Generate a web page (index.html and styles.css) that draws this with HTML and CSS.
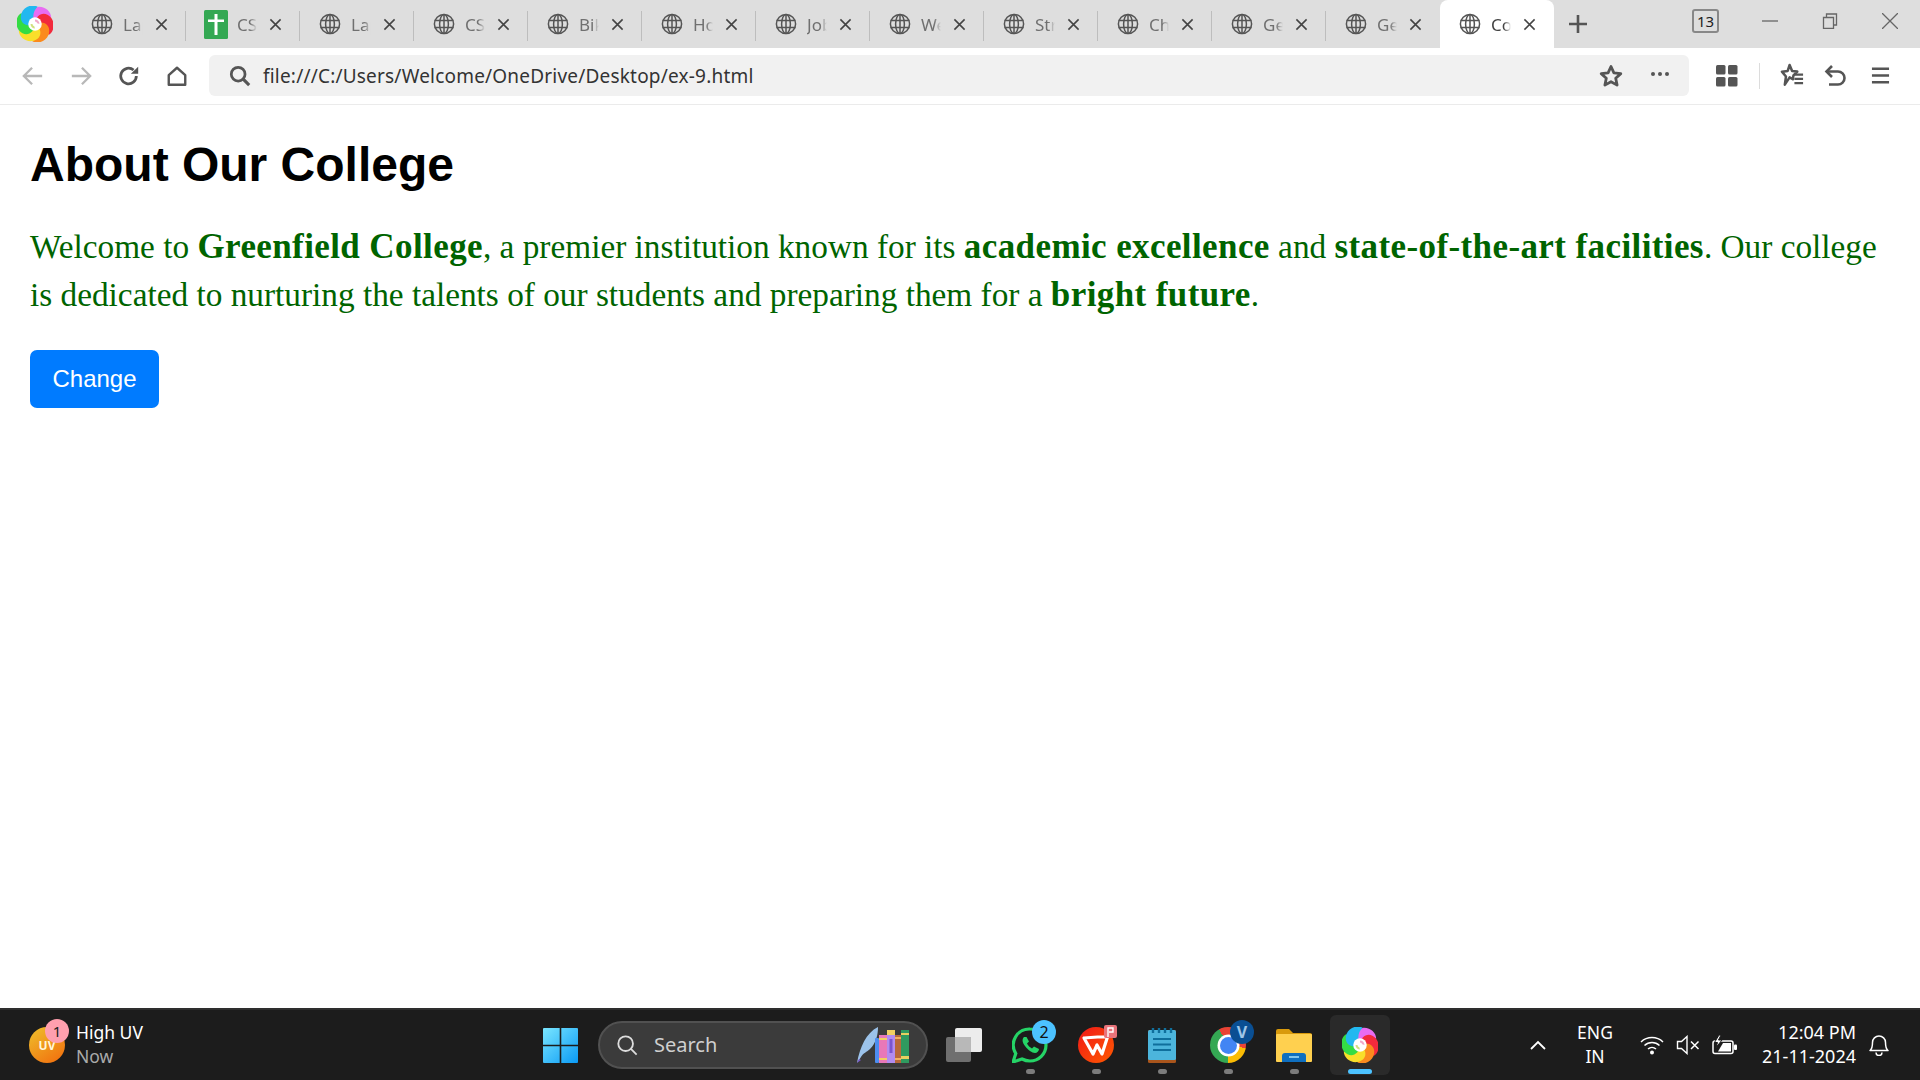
FILE: index.html
```html
<!DOCTYPE html>
<html lang="en">
<head>
<meta charset="utf-8">
<title>About Our College</title>
<link rel="stylesheet" href="styles.css">
</head>
<body>
<svg class="defs" width="0" height="0" aria-hidden="true">
  <defs>
    <symbol id="globe" viewBox="0 0 22 22"><g fill="none" stroke="#555" stroke-width="1.5"><circle cx="11" cy="11" r="9.6"/><ellipse cx="11" cy="11" rx="4.4" ry="9.6"/><path d="M1.6 7.6h18.8M1.6 14.4h18.8M11 1.4v19.2"/></g></symbol>
    <symbol id="x" viewBox="0 0 14 14"><path d="M1.5 1.5l11 11M12.5 1.5l-11 11" fill="none" stroke="#444" stroke-width="1.7"/></symbol>
    <symbol id="swirl" viewBox="0 0 40 40">
      <path d="M20 20C11 14 12 3 23 1c8-1 15 5 15 12-6-2-13 0-18 7z" fill="#e86cf2"/>
      <path d="M20 20C11 14 12 3 23 1c8-1 15 5 15 12-6-2-13 0-18 7z" fill="#f22a3c" transform="rotate(60 20 20)"/>
      <path d="M20 20C11 14 12 3 23 1c8-1 15 5 15 12-6-2-13 0-18 7z" fill="#fb8a1e" transform="rotate(120 20 20)"/>
      <path d="M20 20C11 14 12 3 23 1c8-1 15 5 15 12-6-2-13 0-18 7z" fill="#f9df2a" transform="rotate(180 20 20)"/>
      <path d="M20 20C11 14 12 3 23 1c8-1 15 5 15 12-6-2-13 0-18 7z" fill="#34dc44" transform="rotate(240 20 20)"/>
      <path d="M20 20C11 14 12 3 23 1c8-1 15 5 15 12-6-2-13 0-18 7z" fill="#22b8f0" transform="rotate(300 20 20)"/>
      <circle cx="20" cy="20" r="7.500" fill="#fff"/>
      <path d="M20 15a5 5 0 0 1 5 5l-2.500-.8a3 3 0 0 0-2.500-2z" fill="#f0a8c8"/>
      <path d="M15 20a5 5 0 0 0 5 5l-.8-2.500a3 3 0 0 1-2-2.500z" fill="#d0e080"/>
    </symbol>
  </defs>
</svg>

<header class="browser">
  <div class="tabstrip">
    <div class="app-logo"><svg class="swirl-lg"><use href="#swirl"/></svg></div>
    <div class="tabs">
      <div class="tab"><svg class="globe"><use href="#globe"/></svg><span class="tab-title">Lap</span><svg class="tab-x"><use href="#x"/></svg></div>
      <div class="tab"><svg class="sheet" viewBox="0 0 24 29"><rect width="24" height="29" rx="1.500" fill="#34a853"/><path d="M4 9.500h6.500V4h3v5.500H20v2.600h-6.500V25h-3V12.100H4z" fill="#fff"/></svg><span class="tab-title">CS</span><svg class="tab-x"><use href="#x"/></svg></div>
      <div class="tab"><svg class="globe"><use href="#globe"/></svg><span class="tab-title">Lap</span><svg class="tab-x"><use href="#x"/></svg></div>
      <div class="tab"><svg class="globe"><use href="#globe"/></svg><span class="tab-title">CS</span><svg class="tab-x"><use href="#x"/></svg></div>
      <div class="tab"><svg class="globe"><use href="#globe"/></svg><span class="tab-title">Bik</span><svg class="tab-x"><use href="#x"/></svg></div>
      <div class="tab"><svg class="globe"><use href="#globe"/></svg><span class="tab-title">Ho</span><svg class="tab-x"><use href="#x"/></svg></div>
      <div class="tab"><svg class="globe"><use href="#globe"/></svg><span class="tab-title">Job</span><svg class="tab-x"><use href="#x"/></svg></div>
      <div class="tab"><svg class="globe"><use href="#globe"/></svg><span class="tab-title">We</span><svg class="tab-x"><use href="#x"/></svg></div>
      <div class="tab"><svg class="globe"><use href="#globe"/></svg><span class="tab-title">Str</span><svg class="tab-x"><use href="#x"/></svg></div>
      <div class="tab"><svg class="globe"><use href="#globe"/></svg><span class="tab-title">Ch</span><svg class="tab-x"><use href="#x"/></svg></div>
      <div class="tab"><svg class="globe"><use href="#globe"/></svg><span class="tab-title">Ge</span><svg class="tab-x"><use href="#x"/></svg></div>
      <div class="tab"><svg class="globe"><use href="#globe"/></svg><span class="tab-title">Ge</span><svg class="tab-x"><use href="#x"/></svg></div>
      <div class="tab active"><svg class="globe"><use href="#globe"/></svg><span class="tab-title">Co</span><svg class="tab-x"><use href="#x"/></svg></div>
    </div>
    <svg class="plus" viewBox="0 0 20 20"><path d="M10 1v18M1 10h18" stroke="#555" stroke-width="2.600" fill="none"/></svg>
    <div class="window-controls">
      <span class="tab-count">13</span>
      <svg class="win-btn" viewBox="0 0 16 16"><path d="M0 8h16" stroke="#666" stroke-width="1.300"/></svg>
      <svg class="win-btn" viewBox="0 0 16 16"><path d="M1.500 4.500h10v11h-10zM4.500 4.500v-3.500h10v11h-3" fill="none" stroke="#666" stroke-width="1.300"/></svg>
      <svg class="win-btn" viewBox="0 0 16 16"><path d="M0 0l16 16M16 0l-16 16" stroke="#666" stroke-width="1.300"/></svg>
    </div>
  </div>
  <div class="toolbar">
    <div class="nav-buttons">
      <svg class="tool" viewBox="0 0 24 24"><path d="M22 12H3M11 3l-9 9 9 9" fill="none" stroke="#b8b8b8" stroke-width="2.500"/></svg>
      <svg class="tool" viewBox="0 0 24 24"><path d="M2 12h19M13 3l9 9-9 9" fill="none" stroke="#b8b8b8" stroke-width="2.500"/></svg>
      <svg class="tool" viewBox="0 0 24 24"><path d="M20 12a8.500 8.500 0 1 1-3-6.500" fill="none" stroke="#555" stroke-width="3"/><path d="M14 9.500h8V2z" fill="#555"/></svg>
      <svg class="tool" viewBox="0 0 24 24"><path d="M3 11l9-8 9 8v10.500H3z" fill="none" stroke="#555" stroke-width="2.600" stroke-linejoin="round"/></svg>
    </div>
    <div class="address">
      <svg class="addr-search" viewBox="0 0 24 24"><circle cx="10" cy="10" r="7.500" fill="none" stroke="#555" stroke-width="3"/><path d="M15.500 15.500L22 22" stroke="#555" stroke-width="3.400"/></svg>
      <span class="url">file:///C:/Users/Welcome/OneDrive/Desktop/ex-9.html</span>
      <svg class="addr-star" viewBox="0 0 24 24"><path d="M12 2.500l2.900 6.300 6.900.8-5.100 4.700 1.400 6.800-6.100-3.400-6.100 3.400 1.400-6.800L2.200 9.600l6.900-.8z" fill="none" stroke="#555" stroke-width="2.800" stroke-linejoin="round"/></svg>
      <svg class="addr-more" viewBox="0 0 20 6"><circle cx="3" cy="3" r="2" fill="#555"/><circle cx="10" cy="3" r="2" fill="#555"/><circle cx="17" cy="3" r="2" fill="#555"/></svg>
    </div>
    <div class="tool-right">
      <svg class="tool-grid" viewBox="0 0 22 22"><rect x="0" y="0" width="9.500" height="9.500" rx="1.500" fill="#555"/><rect x="12" y="0" width="9.500" height="9.500" rx="1.500" fill="#555"/><rect x="0" y="12" width="9.500" height="9.500" rx="1.500" fill="#555"/><rect x="12" y="12" width="9.500" height="9.500" rx="1.500" fill="#555"/></svg>
      <span class="tool-sep"></span>
      <svg class="tool-fav" viewBox="0 0 26 26"><path d="M10 2l2.600 6.300 5.400.6-4 4-.5 2.500v1.500l-.2 0-3.300-1.900-5 7.500 1.200-8.500L2 9l6-.7z" fill="none" stroke="#555" stroke-width="2.600" stroke-linejoin="round"/><path d="M15 12h9M15 16.500h9M15 21h9" stroke="#555" stroke-width="2.400"/></svg>
      <svg class="tool-undo" viewBox="0 0 24 24"><path d="M8 2L2.500 7.500 8 13" fill="none" stroke="#555" stroke-width="2.600"/><path d="M3 7.500h11a6.500 6.500 0 0 1 0 13H5" fill="none" stroke="#555" stroke-width="2.600"/></svg>
      <svg class="tool-menu" viewBox="0 0 20 20"><path d="M1 3h18M1 10h18M1 17h18" stroke="#555" stroke-width="2.600"/></svg>
    </div>
  </div>
</header>

<main class="page">
  <h1 class="title">About Our College</h1>
  <p class="intro">Welcome to <strong>Greenfield College</strong>, a premier institution known for its <strong>academic excellence</strong> and <strong>state-of-the-art facilities</strong>. Our college is dedicated to nurturing the talents of our students and preparing them for a <strong>bright future</strong>.</p>
  <button class="change" type="button">Change</button>
</main>

<footer class="taskbar">
  <div class="weather">
    <div class="uv"><span class="uv-label">UV</span><span class="uv-badge">1</span></div>
    <div class="weather-text"><span class="weather-main">High UV</span><span class="weather-sub">Now</span></div>
  </div>
  <div class="center">
    <svg class="win-logo" viewBox="0 0 35 35">
      <defs><linearGradient id="wg" x1="0" y1="0" x2="1" y2="1"><stop offset="0" stop-color="#7ae6ff"/><stop offset="1" stop-color="#0a9af5"/></linearGradient></defs>
      <path d="M1 0h15.700v16.700H0V1a1 1 0 0 1 1-1zM18.300 0H34a1 1 0 0 1 1 1v15.700H18.300zM0 18.300h16.700V35H1a1 1 0 0 1-1-1zM18.300 18.300H35V34a1 1 0 0 1-1 1H18.300z" fill="url(#wg)"/>
    </svg>
    <div class="search">
      <svg class="search-icon" viewBox="0 0 24 24"><circle cx="10.500" cy="10.500" r="8" fill="none" stroke="#ddd" stroke-width="2"/><path d="M16 16l6.500 6.500" stroke="#ddd" stroke-width="2"/></svg>
      <span class="search-text">Search</span>
      <svg class="books" viewBox="0 0 55 36">
        <path d="M1 36C4 20 10 6 22 0c0 8-2 16-8 22-3 3-7 4-9 8z" fill="#9cc3ea"/>
        <path d="M1 36l2-4 2 1z" fill="#7a55d0"/>
        <rect x="19" y="11" width="4" height="25" rx="1" fill="#4d8df0"/>
        <rect x="23" y="8" width="8" height="28" fill="#e878b8"/><rect x="23" y="11" width="8" height="2" fill="#f2d060"/><rect x="23" y="31" width="8" height="2" fill="#f2d060"/>
        <rect x="31" y="3" width="8" height="33" fill="#b28cf0"/><rect x="31" y="3" width="8" height="5" fill="#f2d060"/><rect x="33.500" y="12" width="3" height="14" fill="#7a55d0"/>
        <rect x="39" y="8" width="6" height="28" fill="#b8683a"/><rect x="39" y="10" width="6" height="2" fill="#f2b060"/><rect x="39" y="31" width="6" height="2" fill="#f2b060"/>
        <rect x="45" y="3" width="8" height="33" fill="#2f9a5f"/><rect x="45" y="6" width="8" height="2" fill="#e8d060"/><rect x="45" y="29" width="8" height="3" fill="#e8d060"/>
      </svg>
    </div>
    <div class="app taskview-app">
      <svg class="taskview" viewBox="0 0 36 34"><rect x="0" y="9" width="25" height="25" rx="2" fill="#6f6f6f"/><rect x="9" y="0" width="27" height="24" rx="2" fill="#ececec"/><rect x="9" y="9" width="16" height="15" fill="#b8b8b8"/></svg>
    </div>
    <div class="app">
      <svg class="app-icon" viewBox="0 0 36 36"><path d="M18 2a16 16 0 0 1 0 32c-3 0-5.500-.7-8-2L1 35l2.800-8.500A16 16 0 0 1 18 2z" fill="none" stroke="#25d366" stroke-width="3.200"/><path d="M12 10c-2 2-2 5 1 9s7 7 10 7c2 0 4-2 4-4l-5-2.500-2 2c-2-1-4-3-5-5l2-2L14.500 10z" fill="#25d366"/></svg>
      <span class="app-badge badge-blue">2</span><span class="dot"></span>
    </div>
    <div class="app">
      <svg class="app-icon" viewBox="0 0 36 36"><defs><linearGradient id="wps" x1="0" y1="0" x2="1" y2="1"><stop offset="0" stop-color="#f01818"/><stop offset="1" stop-color="#ff5a00"/></linearGradient></defs><circle cx="18" cy="18" r="18" fill="url(#wps)"/><path d="M6 11l13.500-1 10 0-5.500 17-5-9-4 9z" fill="none" stroke="#fff" stroke-width="3.200" stroke-linejoin="round"/></svg>
      <span class="ppt-tag"><svg viewBox="0 0 13 13"><path d="M4 12V3h5v4H5" fill="none" stroke="#fff" stroke-width="1.400"/></svg></span><span class="dot"></span>
    </div>
    <div class="app">
      <svg class="notes" viewBox="0 0 28 35"><rect y="2" width="28" height="33" rx="1.500" fill="#a9551c"/><rect y="2" width="28" height="30" rx="1.500" fill="#4cb5dc"/><path d="M5 0v5M11 0v5M17 0v5M23 0v5" stroke="#0f6f9c" stroke-width="2.400"/><path d="M5 11h18M5 16.500h18M5 22h18" stroke="#0f6f9c" stroke-width="2"/></svg>
      <span class="dot"></span>
    </div>
    <div class="app">
      <span class="chrome"><span class="chrome-core"></span></span>
      <span class="app-badge badge-navy">V</span><span class="dot"></span>
    </div>
    <div class="app">
      <svg class="folder" viewBox="0 0 36 33"><path d="M0 2a2 2 0 0 1 2-2h11l4 4h17a2 2 0 0 1 2 2v4H0z" fill="#d99a0c"/><rect y="5" width="36" height="28" rx="1" fill="#ffd04f"/><path d="M6 33v-6a3 3 0 0 1 3-3h18a3 3 0 0 1 3 3v6z" fill="#0f6fc0"/><rect x="13" y="27" width="10" height="2" fill="#7fc4ee"/></svg>
      <span class="dot"></span>
    </div>
    <div class="app app-active">
      <svg class="app-icon"><use href="#swirl"/></svg>
      <span class="dot dot-active"></span>
    </div>
  </div>
  <div class="tray">
    <svg class="chev" viewBox="0 0 16 10"><path d="M1 9l7-7 7 7" fill="none" stroke="#fff" stroke-width="1.800"/></svg>
    <div class="lang"><span>ENG</span><span>IN</span></div>
    <div class="tray-icons">
      <svg class="wifi" viewBox="0 0 24 20"><path d="M1 7a16 16 0 0 1 22 0M4.500 10.500a11 11 0 0 1 15 0M8 14a6 6 0 0 1 8 0" fill="none" stroke="#fff" stroke-width="1.500"/><circle cx="12" cy="17.500" r="2" fill="#fff"/></svg>
      <svg class="speaker" viewBox="0 0 24 20"><path d="M1.500 6.500h4L11 1.500v17l-5.500-5h-4z" fill="none" stroke="#fff" stroke-width="1.400"/><path d="M15 6.500l7.500 7.500M22.500 6.500L15 14" stroke="#fff" stroke-width="1.500"/></svg>
      <svg class="battery" viewBox="0 0 26 20"><rect x="1" y="6" width="20" height="12.500" rx="2" fill="none" stroke="#fff" stroke-width="1.500"/><path d="M6 16.500l5-8.500h8v8.500z" fill="#fff"/><rect x="22" y="9.500" width="3" height="5.500" rx="1" fill="#fff"/><path d="M7 0L2.500 7.500h3L4 12.500l6-7.500H6.500L9 0z" fill="#fff" stroke="#1c1c1c"/></svg>
    </div>
    <div class="clock"><span>12:04 PM</span><span>21-11-2024</span></div>
    <svg class="bell" viewBox="0 0 20 22"><path d="M1 16.500c2-1.500 2.500-3 2.500-8a6.500 6.500 0 0 1 13 0c0 5 .5 6.500 2.500 8z" fill="none" stroke="#fff" stroke-width="1.500" stroke-linejoin="round"/><path d="M7 18.500a3 3 0 0 0 6 0" fill="none" stroke="#fff" stroke-width="1.500"/></svg>
  </div>
</footer>
</body>
</html>
```
FILE: styles.css
```css
* { box-sizing: border-box; }
html, body { height: 100%; }
body {
  margin: 0;
  height: 100vh;
  display: flex;
  flex-direction: column;
  overflow: hidden;
  background: #fff;
  font-family: "Liberation Sans", Arial, sans-serif;
}
.defs { position: absolute; }
svg { display: block; flex: none; }

/* Browser chrome */
.browser { flex: none; }
.tabstrip {
  height: 48px;
  display: flex;
  align-items: center;
  background: #dedede;
}
.app-logo { width: 72px; padding-left: 17px; }
.swirl-lg { width: 36px; height: 36px; filter: blur(0.5px); }
.tabs { display: flex; height: 48px; }
.tab {
  width: 114px;
  height: 48px;
  padding-left: 19px;
  display: flex;
  align-items: center;
  position: relative;
  font-family: "Noto Sans", sans-serif;
  font-size: 17px;
  color: #707070;
}
.tab::after {
  content: "";
  position: absolute;
  right: 0;
  top: 11px;
  height: 30px;
  width: 1px;
  background: #bdbdbd;
}
.tab.active {
  background: #fff;
  border-radius: 8px 8px 0 0;
  color: #444;
}
.tab:nth-last-child(2)::after, .tab.active::after { display: none; }
.globe { width: 22px; height: 22px; }
.sheet { width: 24px; height: 29px; margin-left: -1px; margin-right: -1px; }
.tab-title {
  width: 20px;
  margin-left: 10px;
  overflow: hidden;
  white-space: nowrap;
  -webkit-mask-image: linear-gradient(90deg, #000 65%, transparent);
  mask-image: linear-gradient(90deg, #000 65%, transparent);
}
.tab-x { width: 13px; height: 13px; margin-left: 12px; }
.plus { width: 20px; height: 20px; margin-left: 14px; }
.window-controls {
  margin-left: auto;
  display: flex;
  align-items: center;
  height: 48px;
  padding-right: 22px;
}
.tab-count {
  width: 27px;
  height: 24px;
  margin-right: 43px;
  margin-top: -6px;
  border: 2px solid #888;
  border-radius: 3px;
  font-family: "Noto Sans", sans-serif;
  font-size: 15px;
  line-height: 21px;
  text-align: center;
  color: #222;
}
.win-btn { width: 16px; height: 16px; margin-left: 44px; margin-top: -6px; }
.win-btn:first-of-type { margin-left: 0; }

.toolbar {
  height: 57px;
  display: flex;
  align-items: center;
  background: #fff;
  border-bottom: 1px solid #ebebeb;
  padding-bottom: 1px;
}
.nav-buttons {
  width: 209px;
  padding-left: 22px;
  display: flex;
  gap: 26px;
}
.tool { width: 22px; height: 22px; }
.address {
  width: 1480px;
  height: 41px;
  display: flex;
  align-items: center;
  background: #f1f1f1;
  border-radius: 6px;
  padding-left: 20px;
}
.addr-search { width: 22px; height: 22px; }
.url {
  margin-left: 12px;
  font-family: "Noto Sans", sans-serif;
  font-size: 19px;
  letter-spacing: 0.2px;
  color: #333;
  white-space: nowrap;
}
.addr-star { width: 24px; height: 24px; margin-left: auto; }
.addr-more { width: 20px; height: 6px; margin-left: 27px; margin-right: 19px; margin-top: -4px; }
.tool-right {
  display: flex;
  align-items: center;
  padding-left: 27px;
}
.tool-grid { width: 22px; height: 22px; }
.tool-sep { width: 1px; height: 26px; background: #dcdcdc; margin: 0 20px 0 21px; }
.tool-fav { width: 25px; height: 25px; }
.tool-undo { width: 24px; height: 24px; margin-left: 19px; }
.tool-menu { width: 19px; height: 19px; margin-left: 23px; }

/* Page */
.page { flex: 1; padding: 32px 30px 0; }
.title {
  margin: 0;
  font-size: 48px;
  line-height: 55px;
  font-weight: 700;
  color: #000;
}
.intro {
  margin: 31px 0 31px;
  width: 1860px;
  font-family: "Liberation Serif", "Times New Roman", serif;
  font-size: 33.3px;
  line-height: 48px;
  color: #006400;
}
.intro strong { font-weight: 700; font-size: 35px; line-height: 1; letter-spacing: 0.4px; }
.change {
  display: block;
  width: 129px;
  height: 58px;
  padding: 0;
  border: 0;
  border-radius: 7px;
  background: #007bff;
  color: #fff;
  font-family: "Liberation Sans", Arial, sans-serif;
  font-size: 24px;
}

/* Taskbar */
.taskbar {
  flex: none;
  height: 72px;
  display: flex;
  align-items: center;
  background: #1c1c1c;
  border-top: 2px solid #2e2e2e;
  color: #fff;
  font-family: "Noto Sans", sans-serif;
}
.weather { width: 543px; display: flex; align-items: center; padding-left: 29px; }
.uv {
  width: 36px;
  height: 36px;
  border-radius: 50%;
  position: relative;
  background: linear-gradient(145deg, #eec12c, #f26a0c);
  display: flex;
  align-items: center;
  justify-content: center;
}
.uv-label { font-size: 12px; font-weight: 700; color: #fff6d8; }
.uv-badge {
  position: absolute;
  left: 16px;
  top: -8px;
  width: 24px;
  height: 24px;
  border-radius: 50%;
  background: #ff9fae;
  color: #222;
  font-size: 15px;
  line-height: 24px;
  text-align: center;
}
.weather-text { display: flex; flex-direction: column; margin-left: 11px; line-height: 24px; margin-top: -3px; }
.weather-main { font-size: 17.5px; color: #fff; }
.weather-sub { font-size: 17.5px; color: #aaa; }

.center { display: flex; align-items: center; }
.win-logo { width: 35px; height: 35px; }
.search {
  width: 330px;
  height: 48px;
  margin-left: 20px;
  display: flex;
  align-items: center;
  background: #3b3b3b;
  border: 2px solid #515151;
  border-radius: 24px;
  padding-left: 16px;
  padding-right: 15px;
}
.search-icon { width: 22px; height: 22px; }
.search-text { margin-left: 16px; font-size: 20px; color: #cfcfcf; margin-top: -2px; }
.books { width: 55px; height: 36px; margin-left: auto; }
.app {
  width: 66px;
  height: 60px;
  display: flex;
  align-items: center;
  justify-content: center;
  position: relative;
}
.taskview-app { margin-left: 3px; }
.taskview { width: 36px; height: 34px; }
.app-icon { width: 36px; height: 36px; }
.notes { width: 28px; height: 35px; }
.folder { width: 36px; height: 33px; }
.app-badge {
  position: absolute;
  left: 35px;
  top: 5px;
  width: 24px;
  height: 24px;
  border-radius: 50%;
  font-size: 16px;
  line-height: 24px;
  text-align: center;
}
.badge-blue { background: #4cc2ff; color: #111; }
.badge-navy { background: #0a4f93; color: #9fc6e8; font-weight: 700; }
.ppt-tag {
  position: absolute;
  left: 41px;
  top: 10px;
  width: 13px;
  height: 13px;
  border-radius: 2px;
  background: #e8737a;
}
.dot {
  position: absolute;
  left: 29px;
  bottom: 1px;
  width: 9px;
  height: 5px;
  border-radius: 3px;
  background: #7c7c7c;
}
.chrome {
  width: 36px;
  height: 36px;
  border-radius: 50%;
  display: flex;
  align-items: center;
  justify-content: center;
  background: conic-gradient(from -30deg, #ea4335 0 130deg, #fbbc04 130deg 210deg, #34a853 210deg 360deg);
}
.chrome-core {
  width: 17px;
  height: 17px;
  border-radius: 50%;
  background: #4285f4;
  box-shadow: 0 0 0 2.500px #fff;
}
.app-active {
  background: #2a2a2a;
  border-radius: 6px;
  margin-left: 3px;
  width: 60px;
}
.dot-active {
  left: 18px;
  bottom: 1px;
  width: 24px;
  background: #4cc2ff;
}

.tray { margin-left: auto; display: flex; align-items: center; padding-right: 31px; }
.chev { width: 16px; height: 10px; margin-right: 29px; }
.lang { display: flex; flex-direction: column; align-items: center; font-size: 17.5px; line-height: 24px; margin-right: 25px; width: 40px; margin-top: -2px; }
.tray-icons { display: flex; align-items: center; gap: 12px; }
.wifi { width: 24px; height: 20px; }
.speaker { width: 24px; height: 20px; }
.battery { width: 26px; height: 20px; }
.clock {
  display: flex;
  flex-direction: column;
  align-items: flex-end;
  width: 110px;
  margin-left: 8px;
  font-size: 18px;
  line-height: 24px;
  margin-top: -2px;
}
.bell { width: 20px; height: 22px; margin-left: 13px; }
```
